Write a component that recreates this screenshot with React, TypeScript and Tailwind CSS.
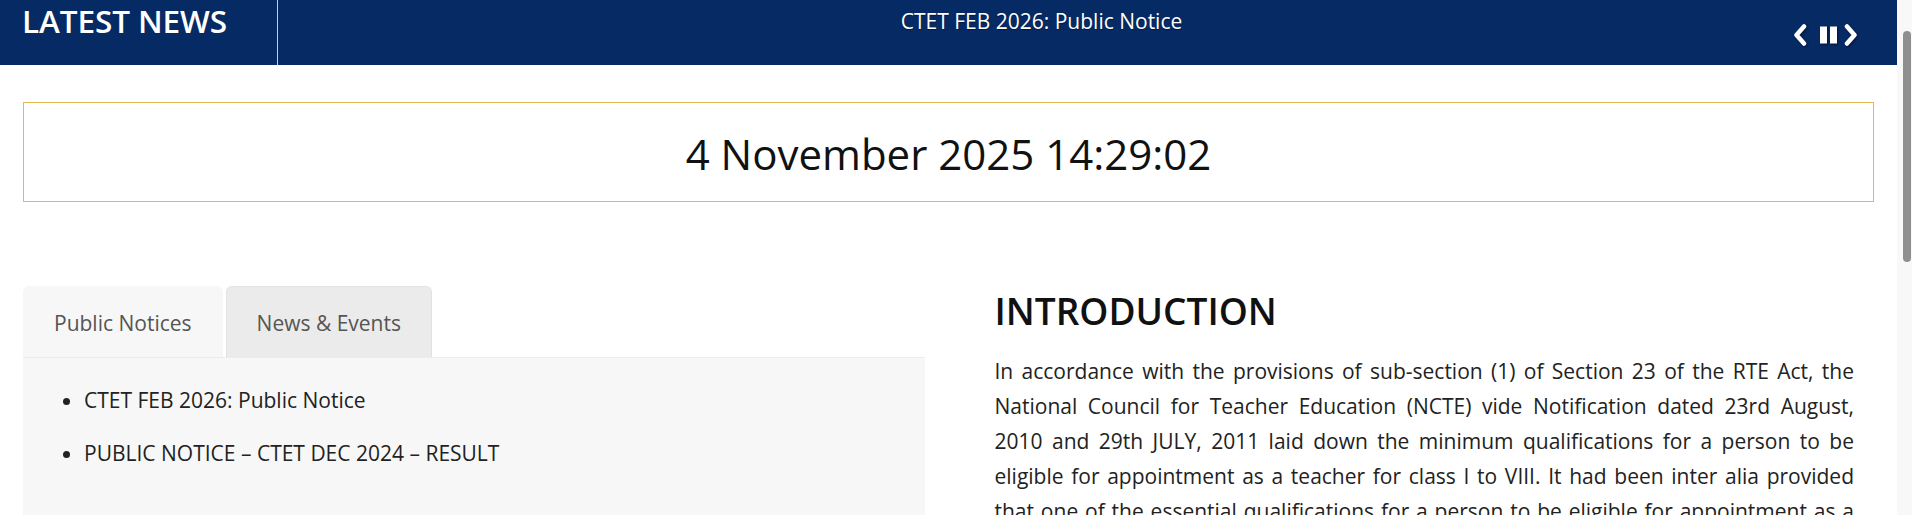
import { useState } from 'react';

const notices = [
    'CTET FEB 2026: Public Notice',
    'PUBLIC NOTICE – CTET DEC 2024 – RESULT',
];

function TickerControls() {
    return (
        <div className="w-[104px] flex items-start pt-[24px]">
            <svg width="14" height="22" viewBox="0 0 14 22" className="drop-shadow-[1px_1px_1px_rgba(0,0,0,0.5)]">
                <path d="M11 2.5 L3.5 11 L11 19.5" fill="none" stroke="white" strokeWidth="4.5" strokeLinecap="round" strokeLinejoin="round" />
            </svg>
            <svg width="17" height="22" viewBox="0 0 17 22" className="ml-[13px] drop-shadow-[1px_1px_1px_rgba(0,0,0,0.5)]">
                <rect x="0" y="2.5" width="7" height="17" fill="white" />
                <rect x="10" y="2.5" width="7" height="17" fill="white" />
            </svg>
            <svg width="14" height="22" viewBox="0 0 14 22" className="ml-[7px] drop-shadow-[1px_1px_1px_rgba(0,0,0,0.5)]">
                <path d="M3 2.5 L10.5 11 L3 19.5" fill="none" stroke="white" strokeWidth="4.5" strokeLinecap="round" strokeLinejoin="round" />
            </svg>
        </div>
    );
}

const tabBase = 'px-[30px] pt-[21px] pb-[19px] text-[21px] leading-[30px] text-[#555] border border-b-0 rounded-t-[6px]';

export default function App() {
    const [tab, setTab] = useState<'notices' | 'news'>('notices');

    return (
        <div className="h-screen overflow-hidden flex bg-white font-['Open_Sans',sans-serif] text-[#222]">
            <div className="flex-1 min-w-0">
                {/* ticker bar */}
                <div className="h-[65px] bg-[#062a64] flex text-white">
                    <div className="w-[278px] shrink-0 border-r border-[#c8cfdc] pl-[22px]">
                        <span className="text-[31.5px] leading-[42px] font-semibold tracking-[-0.1px]">LATEST NEWS</span>
                    </div>
                    <div className="flex-1 pl-[12px] pt-[6px] text-center">
                        <span className="text-[21px] leading-[30px] [text-shadow:0_1px_1px_rgba(0,0,0,0.4)]">
                            CTET FEB 2026: Public Notice
                        </span>
                    </div>
                    <TickerControls />
                </div>

                <div className="px-[23px]">
                    {/* clock */}
                    <div className="mt-[37px] h-[100px] border border-[#e5b74f] flex items-center justify-center pt-[2px]">
                        <span className="text-[42px] text-[#111]">4 November 2025 14:29:02</span>
                    </div>

                    <div className="mt-[84px] grid grid-cols-2 pb-[60px]">
                        {/* tabs */}
                        <div className="pr-[24px]">
                            <div className="flex gap-[3px]">
                                <button
                                    onClick={() => setTab('notices')}
                                    className={
                                        tab === 'notices'
                                            ? tabBase + ' bg-[#f7f7f7] border-[#f7f7f7]'
                                            : tabBase + ' bg-[#ebebeb] border-[#e2e2e2]'
                                    }
                                >
                                    Public Notices
                                </button>
                                <button
                                    onClick={() => setTab('news')}
                                    className={
                                        tab === 'news'
                                            ? tabBase + ' bg-[#f7f7f7] border-[#f7f7f7]'
                                            : tabBase + ' bg-[#ebebeb] border-[#e2e2e2]'
                                    }
                                >
                                    News &amp; Events
                                </button>
                            </div>
                            <div className="bg-[#f7f7f7] border-t border-[#ececec] min-h-[420px]">
                                <ul className="list-disc pl-[61px] pt-[25px] text-[21px] leading-[35px] text-[#222]">
                                    {(tab === 'notices' ? notices : ['CTET Information Bulletin']).map((n) => (
                                        <li key={n} className="mb-[18px]">
                                            {n}
                                        </li>
                                    ))}
                                </ul>
                            </div>
                        </div>

                        {/* introduction */}
                        <div className="pl-[46px] pr-[20px] pt-[3px]">
                            <h2 className="text-[37px] leading-[44px] font-semibold text-[#111]">INTRODUCTION</h2>
                            <p className="mt-[21px] text-[21px] leading-[35px] text-justify text-[#222]">
                                In accordance with the provisions of sub-section (1) of Section 23 of the RTE Act, the National
                                Council for Teacher Education (NCTE) vide Notification dated 23rd August, 2010 and 29th JULY, 2011
                                laid down the minimum qualifications for a person to be eligible for appointment as a teacher for
                                class I to VIII. It had been inter alia provided that one of the essential qualifications for a
                                person to be eligible for appointment as a teacher in any of the schools referred to in clause (n)
                                of section 2 of the RTE Act is that he/she should pass the Teacher Eligibility Test (TET) which will
                                be conducted by the appropriate Government in accordance with the Guidelines framed by the NCTE.
                            </p>
                        </div>
                    </div>
                </div>
            </div>

            {/* page scrollbar */}
            <div className="w-[15px] shrink-0 bg-[#f8f8f8] pl-[6px] pt-[31px]">
                <div className="w-[8px] h-[231px] rounded-full bg-[#8f8f8f]" />
            </div>
        </div>
    );
}
